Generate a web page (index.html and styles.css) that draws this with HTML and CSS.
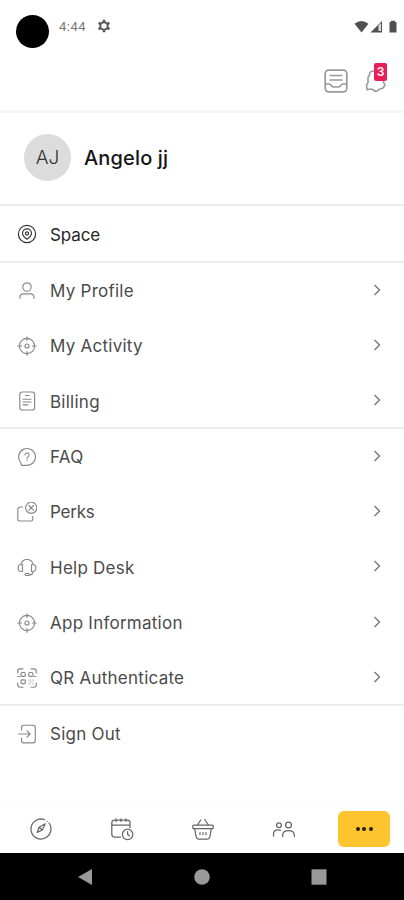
FILE: index.html
```html
<!DOCTYPE html>
<html lang="en">
<head>
<meta charset="utf-8">
<meta name="viewport" content="width=device-width, initial-scale=1">
<title>Menu</title>
<link rel="stylesheet" href="styles.css">
</head>
<body>
<svg class="defs" aria-hidden="true">
  <symbol id="target" viewBox="0 0 20 20"><circle cx="10" cy="10" r="7.6"/><circle cx="10" cy="10" r="2"/><path d="M10 .7v3.8M10 15.5v3.8M.7 10h3.8M15.5 10h3.8"/></symbol>
  <symbol id="chevron" viewBox="0 0 8 12"><path d="M1.5 1L6.5 6l-5 5"/></symbol>
</svg>
<div class="screen">
  <header class="top">
    <div class="status">
      <span class="camera"></span>
      <span class="time">4:44</span>
      <svg class="gear" viewBox="0 0 14 14"><circle cx="7" cy="7" r="3.7" fill="none" stroke="#555" stroke-width="1.9"/><path d="M7 .8v2M7 11.2v2M1.6 3.9l1.8 1M10.6 9.1l1.8 1M1.6 10.1l1.8-1M10.6 4.9l1.8-1" stroke="#555" stroke-width="2.6"/></svg>
      <svg class="signals" viewBox="0 0 44 14"><path d="M.5 3.7Q7.5-1.7 14.500 3.700L7.500 12.500z"/><path d="M16.500 12.500L28 1v11.500z"/><path d="M24.500 5.500l2.500-2.500v8h-2.500z" fill="#ddd"/><path d="M35.500 2H37V.7h4V2h1.500v10.500h-7z"/></svg>
    </div>
    <div class="actions">
      <svg class="inbox" viewBox="0 0 24 24"><rect x="1.200" y="1.200" width="21.600" height="21.600" rx="3.500"/><path d="M5.500 6.500h13M5.500 11h13M1.500 15h4c1.300 0 1.800 3 3.800 3h5.400c2 0 2.500-3 3.800-3h4"/></svg>
      <span class="bell">
        <svg viewBox="0 0 22 26"><path d="M9 3C5.500 2.800 4.500 4.500 4.500 7L3 9.500v5L1.500 17.500l.5 4 4.500-.5 2.500 1.200a2.500 2.500 0 0 0 4.500-.7l4.500-1.500 2-3-1.500-3V8C18.500 5 13 2.500 9 3z"/></svg>
        <span class="badge">3</span>
      </span>
    </div>
  </header>

  <section class="profile"><span class="avatar">AJ</span><h1>Angelo jj</h1></section>

  <section class="group space">
    <a class="row"><svg class="icon" viewBox="0 0 20 20"><circle cx="10" cy="10" r="8.600"/><path d="M10 15.200C7 13.200 5.500 11.500 5.500 9.300a4.500 4.500 0 0 1 9 0c0 2.200-1.500 3.900-4.500 5.900z"/><circle cx="10" cy="9.400" r="1.600"/></svg><span class="label">Space</span></a>
  </section>

  <section class="group account">
    <a class="row"><svg class="icon" viewBox="0 0 20 20"><circle cx="10" cy="6" r="4.200"/><path d="M3 17.300v-1c0-2 1.500-3.500 3.500-3.500h7c2 0 3.500 1.500 3.500 3.500v1"/></svg><span class="label">My Profile</span><svg class="chev"><use href="#chevron"/></svg></a>
    <a class="row"><svg class="icon"><use href="#target"/></svg><span class="label">My Activity</span><svg class="chev"><use href="#chevron"/></svg></a>
    <a class="row"><svg class="icon" viewBox="0 0 20 20"><rect x="2.800" y="1" width="14.800" height="18" rx="2.500"/><path d="M8.500 4.500h3.500M6 8.200h8M6 11h8M6 13.800h5"/></svg><span class="label">Billing</span><svg class="chev"><use href="#chevron"/></svg></a>
  </section>

  <section class="group support">
    <a class="row"><svg class="icon" viewBox="0 0 20 20"><path d="M4.500 18.300H10A8.400 8.400 0 1 0 3.600 15.300z"/><path d="M8 8a2 2 0 1 1 3 1.700c-.700.400-1 .8-1 1.600M10 12.700v.6"/></svg><span class="label">FAQ</span><svg class="chev"><use href="#chevron"/></svg></a>
    <a class="row"><svg class="icon" viewBox="0 0 20 20"><circle cx="14.200" cy="5.800" r="5.600"/><path d="M11.900 3.500l4.600 4.600M16.500 3.500l-4.600 4.600M5.500 5H3.500Q.8 5 .8 7.500v9.800c0 1 .7 1.700 1.700 1.700H14c1 0 1.700-.7 1.700-1.700v-3"/></svg><span class="label tight">Perks</span><svg class="chev"><use href="#chevron"/></svg></a>
    <a class="row"><svg class="icon" viewBox="0 0 20 20"><path d="M4 7.500a6.100 6.100 0 0 1 12 0M5.500 7.500v7H4.300c-4.200 0-4.200-7 0-7zM14.500 7.500v7h1.200c4.200 0 4.200-7 0-7zM16 14.500c0 2-1.300 3.300-3.500 3.300"/><rect x="8" y="16.500" width="4.500" height="2" rx="1"/></svg><span class="label">Help Desk</span><svg class="chev"><use href="#chevron"/></svg></a>
    <a class="row"><svg class="icon"><use href="#target"/></svg><span class="label">App Information</span><svg class="chev"><use href="#chevron"/></svg></a>
    <a class="row"><svg class="icon" viewBox="0 0 20 20"><path d="M.7 5V3Q.7.800 3 .8h3M14 .8h3q2.300 0 2.300 2.200v2M.7 15v2q0 2.200 2.300 2.200h3M14 19.200h3q2.300 0 2.300-2.200v-2"/><rect x="4" y="4.500" width="4.300" height="3.800" rx="1"/><rect x="11.700" y="4.500" width="4.300" height="3.800" rx="1"/><rect x="4" y="11.800" width="4.300" height="3.800" rx="1"/><path d="M1 8.500h2M17 8.500h2"/><path class="faint" d="M11.500 12h2M15 12h1.500M12.500 14h3M11.500 16h2M15.500 16h1"/></svg><span class="label">QR Authenticate</span><svg class="chev"><use href="#chevron"/></svg></a>
  </section>

  <section class="group signout">
    <a class="row"><svg class="icon" viewBox="0 0 20 20"><path d="M4.500 6V3.500q0-2.300 2.300-2.300h9.200q2.300 0 2.300 2.300v13q0 2.300-2.300 2.300H6.800q-2.300 0-2.300-2.300V14M1.500 10h11.500M10 6.900l3.100 3.100-3.100 3.100"/></svg><span class="label">Sign Out</span></a>
  </section>

  <nav class="tabs">
    <a class="tab"><svg viewBox="0 0 24 24"><path d="M15.500 2.600A10 10 0 1 0 20 6M12 2h.1M18 4.400h.1M8.200 15.500l2-5.300 6-3.400-2.900 6.200zM10.200 10.200l3.100 2.800"/></svg></a>
    <a class="tab"><svg viewBox="0 0 24 24"><path d="M10.500 20H4.500Q1.800 20 1.800 17.300V5.700Q1.800 3 4.500 3h12.800Q20 3 20 5.700v5M1.800 8H20M6 1.800v2.700M11 1.800v2.700M16 1.800v2.700"/><circle cx="17.600" cy="17.400" r="5.200"/><path d="M17.600 14.500v3l2 1.300"/></svg></a>
    <a class="tab"><svg viewBox="0 0 24 24"><path d="M2.700 8h18.600q.9 0 .9 1v1.700q0 1-.9 1H2.700q-.9 0-.9-1V9q0-1 .9-1zM3.700 12l1.500 8q.3 2 2.500 2h8.600q2.200 0 2.500-2l1.500-8M6.500 8l3.200-5M17.500 8l-3.800-5.500M9 15.500v2M12 15.500v2M15 15.500v2"/></svg></a>
    <a class="tab"><svg viewBox="0 0 24 24"><circle cx="7" cy="8.300" r="2.400"/><circle cx="16.500" cy="8" r="2.900"/><path d="M1.500 19v-2c0-2.600 2-4.200 4.500-4.200 1 0 1.800.2 2.500.6M10.700 19.500V18c0-3 2.400-4.500 5.800-4.500s5.800 1.500 5.800 4.500v1.500"/></svg></a>
    <a class="tab more"><i></i><i></i><i></i></a>
  </nav>

  <footer class="system">
    <svg class="back" viewBox="0 0 14 16"><path d="M14 0v16L0 8z"/></svg>
    <svg viewBox="0 0 16 16"><circle cx="8" cy="8" r="7.800"/></svg>
    <svg viewBox="0 0 16 16"><rect x=".5" y=".3" width="15" height="15.400"/></svg>
  </footer>
</div>
</body>
</html>
```
FILE: styles.css
```css
* { box-sizing: border-box; }
body { margin: 0; background: #fff; font-family: Inter, "Liberation Sans", sans-serif; color: #4b4b4b; }
svg { display: block; }
.defs { position: absolute; width: 0; height: 0; }
.screen { width: 404px; height: 900px; display: flex; flex-direction: column; overflow: hidden; }

.top { height: 113px; flex: none; border-bottom: 3px solid #f5f5f5; }
.status { height: 62px; display: flex; padding: 15px 6px 0 16px; }
.camera { width: 33px; height: 33px; border-radius: 50%; background: #000; }
.time { margin: 4px 0 0 10px; width: 38px; font: 13px/15px Roboto, sans-serif; letter-spacing: .5px; color: #777; }
.gear { width: 14px; height: 14px; margin-top: 4px; }
.signals { width: 44px; height: 14px; margin: 5px 0 0 auto; fill: #505050; }
.actions { display: flex; justify-content: flex-end; gap: 17px; padding: 6px 16px 0 0; }
.inbox { width: 24px; height: 24px; margin-top: 1px; fill: none; stroke: #999; stroke-width: 1.700; }
.bell { position: relative; width: 23px; height: 26px; }
.bell svg { width: 22px; height: 26px; fill: none; stroke: #999; stroke-width: 1.600; }
.badge { position: absolute; left: 9px; top: -5px; width: 13px; height: 18px; border-radius: 2px; background: #e91e55; color: #fff; font-size: 12px; font-weight: 600; line-height: 17px; text-align: center; }

.profile { height: 93px; flex: none; display: flex; align-items: center; gap: 13px; padding: 0 24px 2px; border-bottom: 2px solid #ebebeb; }
.avatar { width: 47px; height: 47px; border-radius: 50%; background: #dcdcdc; display: flex; align-items: center; justify-content: center; font-size: 19px; font-weight: 300; color: #333; }
h1 { margin: 0; font-size: 20px; font-weight: 500; line-height: 26px; color: #161616; letter-spacing: .15px; }

.group { flex: none; border-bottom: 2px solid #ebebeb; }
.space { height: 57px; }
.account { height: 166px; }
.support { height: 277px; }
.signout { height: 95px; border-bottom: 0; }
.row { height: 55.300px; display: flex; align-items: center; padding: 0 23px 0 17px; }
.icon { width: 20px; height: 20px; margin-right: 13px; fill: none; stroke: #888; stroke-width: 1.150; stroke-linecap: round; stroke-linejoin: round; }
.icon .faint { stroke: #c4c4c4; }
.label { font-size: 17px; line-height: 24px; letter-spacing: .25px; padding-top: 1px; }
.tight { letter-spacing: -.2px; }
.space .row { color: #262626; }
.space .label { letter-spacing: -.1px; padding-top: 3px; }
.space .icon { stroke: #333; stroke-width: 1.200; }
.chev { width: 8px; height: 12px; margin: 0 0 2px auto; fill: none; stroke: #777; stroke-width: 1.400; }

.tabs { flex: 1; display: flex; align-items: center; border-top: 1px solid #fafafa; padding: 2px 0 0; }
.tab { width: 81px; display: flex; justify-content: center; }
.tab svg { width: 24px; height: 24px; fill: none; stroke: #666; stroke-width: 1.250; stroke-linecap: round; stroke-linejoin: round; }
.more { width: 52px; height: 36px; margin-left: 14px; border-radius: 6px; background: #ffc42e; align-items: center; gap: 2.500px; }
.more i { width: 4px; height: 4px; border-radius: 50%; background: #29200a; }

.system { height: 47px; flex: none; background: #000; display: flex; align-items: center; padding: 1px 77px 0; justify-content: space-between; }
.system svg { width: 16px; height: 16px; fill: #999; }
```
